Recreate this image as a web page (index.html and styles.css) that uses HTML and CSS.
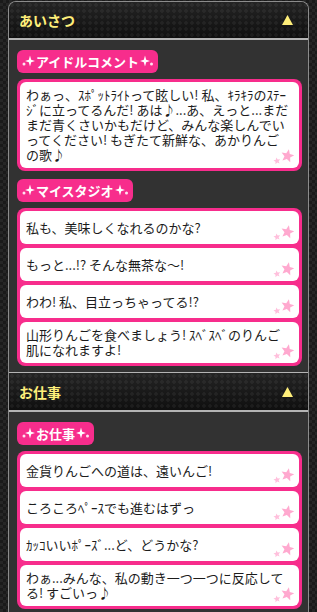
FILE: index.html
```html
<!DOCTYPE html>
<html lang="ja">
<head>
  <meta charset="UTF-8">
  <meta name="viewport" content="width=device-width, initial-scale=1.0">
  <title>あいさつ</title>
  <link rel="stylesheet" href="styles.css">
</head>
<body>
  <svg class="defs" width="0" height="0">
    <symbol id="stars" viewBox="0 0 24 18">
      <polygon fill="#ffa9cf" transform="translate(16.5 8) rotate(12) scale(6.8)" points="0,-1 0.264,-0.364 0.951,-0.309 0.428,0.139 0.588,0.809 0,0.45 -0.588,0.809 -0.428,0.139 -0.951,-0.309 -0.264,-0.364"/>
      <polygon fill="#ffbfdc" transform="translate(6 13) rotate(-10) scale(3.6)" points="0,-1 0.264,-0.364 0.951,-0.309 0.428,0.139 0.588,0.809 0,0.45 -0.588,0.809 -0.428,0.139 -0.951,-0.309 -0.264,-0.364"/>
    </symbol>
    <symbol id="spark" viewBox="0 0 14 14">
      <circle cx="3" cy="10" r="1.5" fill="#ffe3f0"/>
      <path fill="#fff" d="M9 1.5 L10.2 5.8 L14 7 L10.2 8.2 L9 12.5 L7.8 8.2 L4 7 L7.8 5.8 Z"/>
    </symbol>
    <symbol id="spark-r" viewBox="0 0 14 14">
      <path fill="#fff" d="M5 1.5 L6.2 5.8 L10 7 L6.2 8.2 L5 12.5 L3.8 8.2 L0 7 L3.8 5.8 Z"/>
      <circle cx="11.5" cy="10" r="1.5" fill="#ffe3f0"/>
    </symbol>
  </svg>

  <div class="panel">
    <div class="sec-head first">
      <span>あいさつ</span>
      <svg class="tri" width="11" height="10" viewBox="0 0 11 10"><polygon points="5.5,0 11,10 0,10" fill="#ffef7a"/></svg>
    </div>
    <div class="sec-body">
      <div class="badge"><svg class="sp"><use href="#spark"/></svg>アイドルコメント<svg class="sp"><use href="#spark-r"/></svg></div>
      <div class="list">
        <div class="item">わぁっ、ｽﾎﾟｯﾄﾗｲﾄって眩しい! 私、ｷﾗｷﾗのｽﾃｰｼﾞに立ってるんだ! あは♪...あ、えっと...まだまだ青くさいかもだけど、みんな楽しんでいってください! もぎたて新鮮な、あかりんごの歌♪<svg class="stars"><use href="#stars"/></svg></div>
      </div>

      <div class="badge"><svg class="sp"><use href="#spark"/></svg>マイスタジオ<svg class="sp"><use href="#spark-r"/></svg></div>
      <div class="list">
        <div class="item">私も、美味しくなれるのかな?<svg class="stars"><use href="#stars"/></svg></div>
        <div class="item">もっと...!? そんな無茶な～!<svg class="stars"><use href="#stars"/></svg></div>
        <div class="item">わわ! 私、目立っちゃってる!?<svg class="stars"><use href="#stars"/></svg></div>
        <div class="item">山形りんごを食べましょう! ｽﾍﾞｽﾍﾞのりんご肌になれますよ!<svg class="stars"><use href="#stars"/></svg></div>
      </div>
    </div>

    <div class="sec-head">
      <span>お仕事</span>
      <svg class="tri" width="11" height="10" viewBox="0 0 11 10"><polygon points="5.5,0 11,10 0,10" fill="#ffef7a"/></svg>
    </div>
    <div class="sec-body">
      <div class="badge"><svg class="sp"><use href="#spark"/></svg>お仕事<svg class="sp"><use href="#spark-r"/></svg></div>
      <div class="list">
        <div class="item">金貨りんごへの道は、遠いんご!<svg class="stars"><use href="#stars"/></svg></div>
        <div class="item">ころころﾍﾟｰｽでも進むはずっ<svg class="stars"><use href="#stars"/></svg></div>
        <div class="item">ｶｯｺいいﾎﾟｰｽﾞ...ど、どうかな?<svg class="stars"><use href="#stars"/></svg></div>
        <div class="item">わぁ...みんな、私の動き一つ一つに反応してる! すごいっ♪<svg class="stars"><use href="#stars"/></svg></div>
      </div>
    </div>
  </div>
</body>
</html>
```

FILE: styles.css
```css
* { margin: 0; padding: 0; box-sizing: border-box; }
body {
  font-family: "Noto Sans CJK JP", "Noto Sans", sans-serif;
  background: repeating-conic-gradient(#262626 0 25%, #1a1a1a 0 50%) 0 0 / 6px 6px;
  color: #1c1c1c;
}
.defs { position: absolute; }

.panel {
  margin: 1px 8px 0;
  border: 1px solid #8c8c8c;
  border-bottom: none;
  border-radius: 8px 8px 0 0;
  overflow: hidden;
}

.sec-head {
  height: 40px;
  display: flex;
  align-items: center;
  justify-content: space-between;
  padding: 0 15px 0 10px;
  border-top: 1px solid #b4b4b4;
  border-bottom: 2px solid #b4b4b4;
  background:
    radial-gradient(circle, rgba(255,255,255,0.05) 1.5px, transparent 2px) 0 0 / 6px 6px,
    linear-gradient(#242424, #0f0f0f);
  color: #ffef7a;
  font-size: 14px;
  font-weight: bold;
}
.sec-head.first { border-top: none; height: 38px; }
.tri { display: block; }

.sec-body {
  background: #323232;
  padding: 9px 6px 6px 8px;
}

.badge {
  display: inline-flex;
  align-items: center;
  height: 23px;
  padding: 0 3px;
  background: #f72d8c;
  border-radius: 6px;
  color: #fff;
  font-size: 13px;
  font-weight: bold;
}
.sp { width: 14px; height: 14px; margin: 0 1px; }

.list {
  margin: 6px 0 7px;
  padding: 3px;
  background: #f72d8c;
  border-radius: 8px;
  display: flex;
  flex-direction: column;
  gap: 4px;
}
.list:last-child { margin-bottom: 0; }

.item {
  position: relative;
  min-height: 33px;
  display: flex;
  align-items: center;
  padding: 5px 7px 6px 6px;
  background: #fff;
  border-radius: 6px;
  font-size: 13px;
  line-height: 15px;
}
.item .stars {
  position: absolute;
  right: 4px;
  bottom: 2px;
  width: 24px;
  height: 18px;
}
```
